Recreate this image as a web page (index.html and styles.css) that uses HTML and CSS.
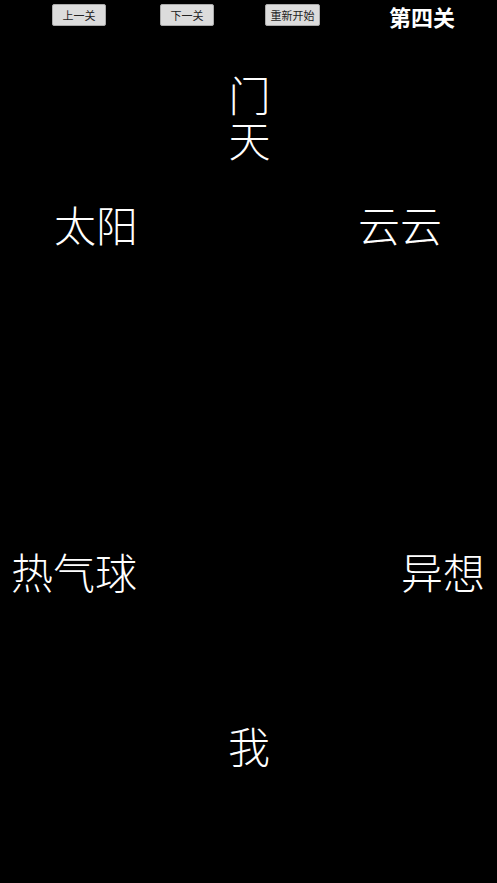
FILE: index.html
```html
<!DOCTYPE html>
<html lang="zh">
<head>
<meta charset="utf-8">
<title>第四关</title>
<link rel="stylesheet" href="styles.css">
</head>
<body>
<div class="toolbar">
  <button class="btn btn-prev">上一关</button>
  <button class="btn btn-next">下一关</button>
  <button class="btn btn-restart">重新开始</button>
  <div class="level-title">第四关</div>
</div>
<div class="board">
  <div class="piece vertical" style="left:228px; top:43px;">门天</div>
  <div class="piece" style="left:54px; top:166px;">太阳</div>
  <div class="piece" style="left:358px; top:166px;">云云</div>
  <div class="piece" style="left:11px; top:513px;">热气球</div>
  <div class="piece" style="left:401px; top:513px;">异想</div>
  <div class="piece" style="left:228px; top:687px;">我</div>
</div>
</body>
</html>
```

FILE: styles.css
```css
html, body {
  margin: 0;
  padding: 0;
  background: #000;
  width: 497px;
  height: 883px;
  overflow: hidden;
  font-family: "Noto Sans CJK SC", "Noto Sans", sans-serif;
}

.toolbar {
  display: flex;
  align-items: center;
  height: 32px;
  padding-left: 52px;
}

.btn {
  box-sizing: border-box;
  height: 22px;
  margin-top: -2px;
  padding: 0;
  background: #dcdcdc;
  border: 1px solid #aaa;
  border-radius: 2px;
  color: #222;
  font-family: "Noto Sans CJK SC", sans-serif;
  font-size: 11px;
  line-height: 20px;
}

.btn-prev { width: 54px; }
.btn-next { width: 54px; margin-left: 54px; }
.btn-restart { width: 55px; margin-left: 51px; }

.level-title {
  margin-left: 69px;
  color: #fff;
  font-size: 22px;
  font-weight: 700;
  line-height: 32px;
}

.board {
  position: relative;
  height: 851px;
}

.piece {
  position: absolute;
  color: #fff;
  font-size: 42px;
  line-height: 52px;
  font-weight: 300;
  white-space: nowrap;
}

.piece.vertical {
  writing-mode: vertical-rl;
  text-orientation: upright;
  letter-spacing: 3px;
  line-height: 42px;
}
```
